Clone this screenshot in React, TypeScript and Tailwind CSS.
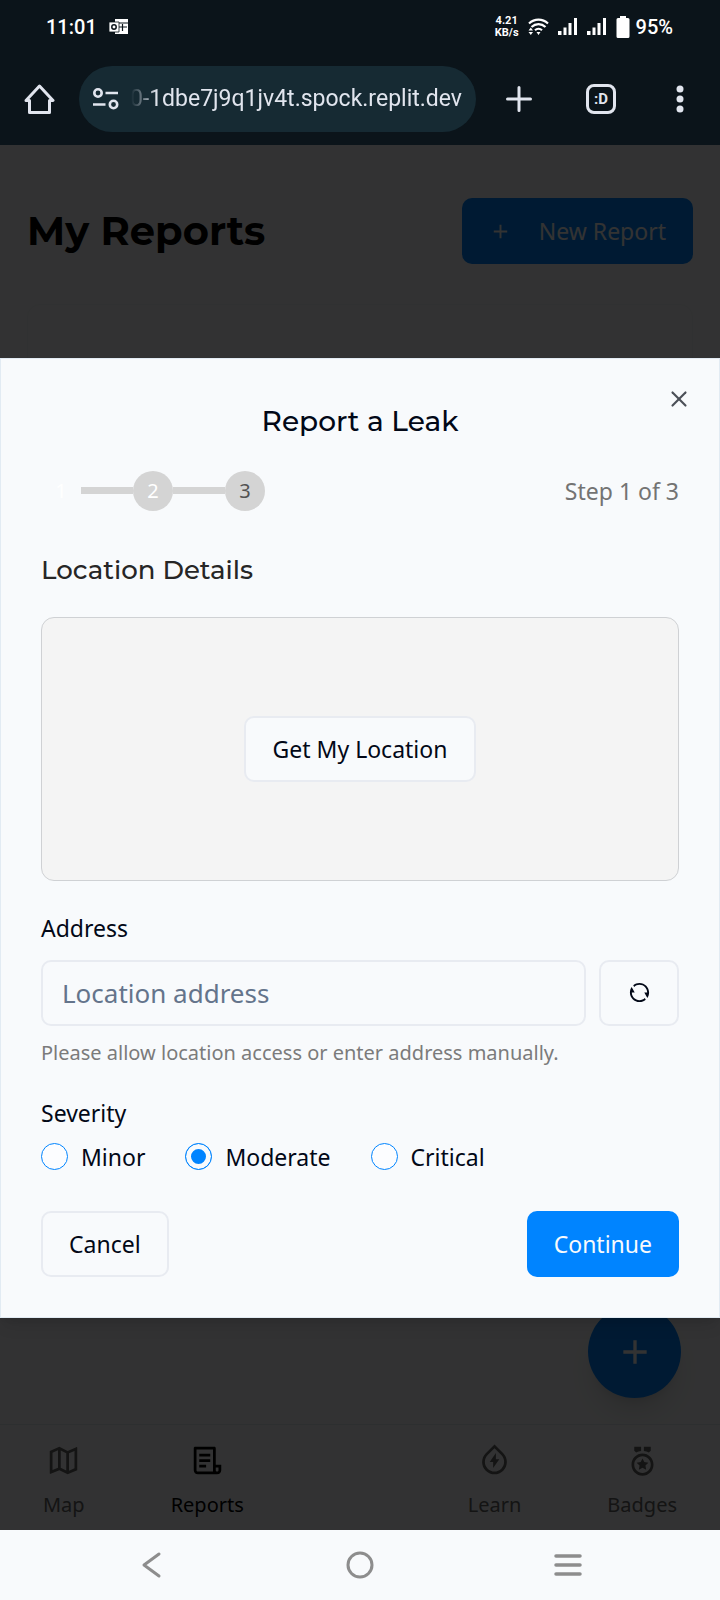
import { useState } from "react";
import type { ReactNode } from "react";
import { X } from "lucide-react";
import {
  RiAddLine,
  RiFileList3Line,
  RiMap2Line,
  RiMedalLine,
  RiRefreshLine,
  RiWaterFlashLine,
} from "react-icons/ri";

function MailIcon() {
  return (
    <svg width="20" height="18" viewBox="0 0 20 18" aria-hidden="true">
      <path d="M6 1h13v15H6z" fill="#fff" />
      <path d="M6 5h13M9 9h9M13.5 6v7" stroke="#0b141a" strokeWidth="1.2" />
      <path d="M0 4h10v10H0z" fill="#fff" stroke="#0b141a" strokeWidth=".8" />
      <circle cx="5" cy="9" r="2.2" fill="none" stroke="#0b141a" strokeWidth="1.5" />
    </svg>
  );
}

function WifiIcon() {
  return (
    <svg width="21" height="18" viewBox="0 0 21 18" fill="none" stroke="#fff" strokeWidth="2.2" aria-hidden="true">
      <path d="M1 5.5c5.5-5.2 13.500-5.200 19 0M3.500 9c4-3.800 10-3.800 14 0M7 12.300c2-1.800 5-1.800 7 0" />
      <path d="M8.500 14h4l-2 3zM.5 12.500h4.500l-2.200-3zM.5 14h4.500l-2.200 3z" fill="#fff" stroke="none" />
    </svg>
  );
}

function SignalIcon() {
  return (
    <svg width="20" height="19" viewBox="0 0 20 19" fill="#fff" aria-hidden="true">
      <path d="M0 14h3.500v4H0zM5.500 10.500h3V18h-3zM10.500 6h3v12h-3zM16 1h3v17h-3z" />
    </svg>
  );
}

function BatteryIcon() {
  return (
    <svg width="14" height="22" viewBox="0 0 14 22" fill="#fff" aria-hidden="true">
      <path d="M4 0h6v2h2a1.500 1.500 0 0 1 1.500 1.500v17A1.500 1.500 0 0 1 12 22H2a1.500 1.500 0 0 1-1.500-1.500v-17A1.500 1.500 0 0 1 2 2h2z" />
    </svg>
  );
}

function StatusBar() {
  return (
    <div className="flex h-[53px] items-center justify-between pr-[47px] pl-[46px] text-[20px] leading-6 font-medium text-white">
      <div className="flex items-center gap-3">
        <span>11:01</span>
        <MailIcon />
      </div>
      <div className="flex items-center gap-[9px]">
        <div className="text-center text-[11px] leading-3 font-bold">
          <div>4.21</div>
          <div>KB/s</div>
        </div>
        <WifiIcon />
        <SignalIcon />
        <SignalIcon />
        <div className="flex items-center gap-1.5">
          <BatteryIcon />
          <span>95%</span>
        </div>
      </div>
    </div>
  );
}

function BrowserBar() {
  return (
    <div className="flex h-[92px] items-center justify-between pr-[34px] pl-6 text-[#e1e5ee]">
      <button type="button" aria-label="Home">
        <svg width="31" height="31" viewBox="0 0 31 31" fill="none" stroke="currentColor" strokeWidth="3" strokeLinejoin="round" strokeLinecap="round">
          <path d="M2 16.500 15.500 2 29 16.500h-3.500v12h-20v-12z" />
        </svg>
      </button>
      <div className="ml-6 flex h-[66px] min-w-0 flex-1 items-center gap-3 rounded-full bg-[#162a33] pr-3.5 pl-3.5">
        <svg className="shrink-0" width="26" height="22" viewBox="0 0 26 22" fill="none" stroke="currentColor" strokeWidth="2.600" aria-hidden="true">
          <circle cx="5" cy="5" r="3.700" />
          <circle cx="20.500" cy="16.500" r="3.700" />
          <path d="M12.500 5H25M0 16.500h12.500" />
        </svg>
        <div className="flex min-w-0 flex-1 justify-end overflow-hidden [mask-image:linear-gradient(to_right,transparent,black_26px)]">
          <span className="text-[23px] leading-8 whitespace-nowrap">0-1dbe7j9q1jv4t.spock.replit.dev</span>
        </div>
      </div>
      <button type="button" aria-label="New tab" className="ml-7">
        <svg width="30" height="30" viewBox="0 0 30 30" stroke="currentColor" strokeWidth="3" strokeLinecap="round">
          <path d="M15 3.500v23M3.500 15h23" />
        </svg>
      </button>
      <button
        type="button"
        aria-label="Switch tabs"
        className="ml-[52px] flex size-[30px] items-center justify-center rounded-lg border-3 border-current text-[15px] leading-none font-bold"
      >
        :D
      </button>
      <button type="button" aria-label="More options" className="ml-[58px]">
        <svg width="12" height="28" viewBox="0 0 12 28" fill="currentColor">
          <circle cx="6" cy="4" r="3.500" />
          <circle cx="6" cy="14" r="3.500" />
          <circle cx="6" cy="24" r="3.500" />
        </svg>
      </button>
    </div>
  );
}

function TabLink({ label, active, children }: { label: string; active?: boolean; children: ReactNode }) {
  return (
    <a
      href="#"
      className={`flex flex-col items-center gap-[14px] text-[20px] leading-7 ${active ? "text-black" : "text-[#646464]"}`}
    >
      {children}
      <span>{label}</span>
    </a>
  );
}

function ReportsPage() {
  return (
    <div className="flex flex-1 flex-col bg-[#f8fafc]">
      <header className="flex items-center justify-between px-[27px] pt-[53px]">
        <h1 className="font-[Montserrat,Inter,sans-serif] text-[40px] leading-[66px] font-bold text-black">My Reports</h1>
        <button
          type="button"
          className="flex h-[66px] items-center gap-[27px] rounded-[10px] bg-[#0084ff] px-[27px] text-[23px] text-white"
        >
          <RiAddLine className="size-[23px]" />
          New Report
        </button>
      </header>
      <section className="mx-[27px] mt-10 mb-auto h-[300px] rounded-[13px] border border-slate-100 bg-[#fafbfd]" />
      <nav className="flex h-[106px] items-start justify-around border-t border-slate-200 bg-[#fafbfd] pt-[19px]">
        <TabLink label="Map">
          <RiMap2Line className="size-[33px]" />
        </TabLink>
        <TabLink label="Reports" active>
          <RiFileList3Line className="size-[33px]" />
        </TabLink>
        <div className="w-[52px]" />
        <TabLink label="Learn">
          <RiWaterFlashLine className="size-[33px]" />
        </TabLink>
        <TabLink label="Badges">
          <RiMedalLine className="size-[33px]" />
        </TabLink>
      </nav>
      <button
        type="button"
        aria-label="Add report"
        className="absolute right-[39px] bottom-[132px] flex size-[93px] items-center justify-center rounded-full bg-[#0084ff] text-white shadow-xl"
      >
        <RiAddLine className="size-10" />
      </button>
    </div>
  );
}

function Stepper() {
  return (
    <div className="mt-7 flex items-center justify-between">
      <ol className="flex items-center text-[20px] leading-none">
        <li className="flex size-10 items-center justify-center rounded-full text-white">1</li>
        <li aria-hidden="true" className="h-[7px] w-[52px] bg-[#d4d4d4]" />
        <li className="flex size-10 items-center justify-center rounded-full bg-[#d4d4d4] text-white">2</li>
        <li aria-hidden="true" className="h-[7px] w-[52px] bg-[#d4d4d4]" />
        <li className="flex size-10 items-center justify-center rounded-full bg-[#d4d4d4] text-[#525252]">3</li>
      </ol>
      <span className="text-[23px] leading-8 text-[#737373]">Step 1 of 3</span>
    </div>
  );
}

const outline = "rounded-[10px] border-2 border-[#e8ebf1] bg-[#f8fafc]";
const levels = ["Minor", "Moderate", "Critical"];

function ReportDialog() {
  const [severity, setSeverity] = useState("Moderate");
  return (
    <form
      role="dialog"
      aria-labelledby="dialog-title"
      className="relative w-full border border-[#e2ebf3] bg-[#f8fafc] px-10 pt-10 pb-10 text-[23px] leading-8 text-[#020817] shadow-lg"
    >
      <button type="button" aria-label="Close" className="absolute top-[27px] right-[27px] text-[#4b4f57]">
        <X className="size-[26px]" />
      </button>
      <h2 id="dialog-title" className="text-center font-[Montserrat,Inter,sans-serif] text-[28px] leading-[44px] font-medium">
        Report a Leak
      </h2>
      <Stepper />
      <h3 className="mt-9 font-[Montserrat,Inter,sans-serif] text-[26px] leading-[46px] font-medium text-[#262626]">Location Details</h3>
      <div className="mt-6 flex h-[264px] items-center justify-center rounded-[13px] border border-[#cfd1d4] bg-[#f4f4f4]">
        <button type="button" className={`h-[66px] px-[27px] ${outline}`}>
          Get My Location
        </button>
      </div>
      <label htmlFor="address" className="mt-[31px] block">
        Address
      </label>
      <div className="mt-4 flex gap-[13px]">
        <input
          id="address"
          type="text"
          placeholder="Location address"
          className={`h-[66px] min-w-0 flex-1 px-[19px] text-[26px] placeholder:text-[#64748b] ${outline}`}
        />
        <button type="button" aria-label="Refresh location" className={`flex h-[66px] w-[80px] items-center justify-center ${outline}`}>
          <RiRefreshLine className="size-[23px]" />
        </button>
      </div>
      <p className="mt-[11px] text-[20px] leading-8 text-[#7b7b7b]">Please allow location access or enter address manually.</p>
      <fieldset className="mt-7">
        <legend>Severity</legend>
        <div className="mt-3 flex gap-10">
          {levels.map((level) => (
            <label key={level} className="flex items-center gap-[13px]">
              <input
                type="radio"
                name="severity"
                checked={severity === level}
                onChange={() => setSeverity(level)}
                className="size-[27px] appearance-none rounded-full border border-[#0084ff] bg-[#fcfdff] checked:bg-[#0084ff] checked:shadow-[inset_0_0_0_5px_#f8fafc]"
              />
              {level}
            </label>
          ))}
        </div>
      </fieldset>
      <div className="mt-[38px] flex justify-between">
        <button type="button" className={`h-[66px] px-[26px] ${outline}`}>
          Cancel
        </button>
        <button type="button" className="h-[66px] rounded-[10px] bg-[#0084ff] px-[27px] text-[#f8fafc]">
          Continue
        </button>
      </div>
    </form>
  );
}

function SystemNav() {
  return (
    <div className="flex h-[70px] items-center justify-around bg-[#f8fafc] px-12 text-[#8d8d8d]">
      <button type="button" aria-label="Back">
        <svg width="28" height="28" viewBox="0 0 28 28" fill="none" stroke="currentColor" strokeWidth="3" strokeLinecap="round" strokeLinejoin="round">
          <path d="M21 3 6 14l15 11" />
        </svg>
      </button>
      <button type="button" aria-label="Home screen">
        <svg width="28" height="28" viewBox="0 0 28 28" fill="none" stroke="currentColor" strokeWidth="3">
          <circle cx="14" cy="14" r="12" />
        </svg>
      </button>
      <button type="button" aria-label="Recent apps">
        <svg width="28" height="28" viewBox="0 0 28 28" stroke="currentColor" strokeWidth="3.500" strokeLinecap="round">
          <path d="M2 5h24M2 14h24M2 23h24" />
        </svg>
      </button>
    </div>
  );
}

export default function App() {
  return (
    <div className="flex min-h-screen flex-col font-['Noto_Sans',sans-serif]">
      <div className="bg-[#0b141a] font-[Roboto,sans-serif]">
        <StatusBar />
        <BrowserBar />
      </div>
      <main className="relative flex flex-1 flex-col">
        <ReportsPage />
        <div className="absolute inset-0 flex items-center bg-black/80">
          <ReportDialog />
        </div>
      </main>
      <SystemNav />
    </div>
  );
}
